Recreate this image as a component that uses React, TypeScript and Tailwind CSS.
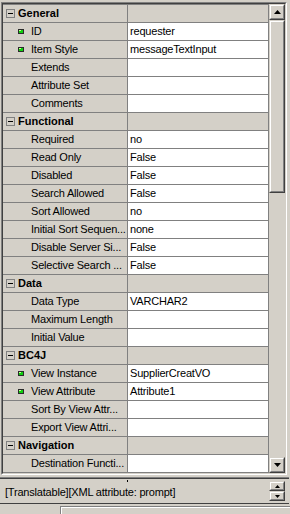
import React from "react";

type Row = { h?: string; l?: string; v?: string; icon?: boolean };

const rows: Row[] = [
  { h: "General" },
  { l: "ID", v: "requester", icon: true },
  { l: "Item Style", v: "messageTextInput", icon: true },
  { l: "Extends" },
  { l: "Attribute Set" },
  { l: "Comments" },
  { h: "Functional" },
  { l: "Required", v: "no" },
  { l: "Read Only", v: "False" },
  { l: "Disabled", v: "False" },
  { l: "Search Allowed", v: "False" },
  { l: "Sort Allowed", v: "no" },
  { l: "Initial Sort Sequen...", v: "none" },
  { l: "Disable Server Si...", v: "False" },
  { l: "Selective Search ...", v: "False" },
  { h: "Data" },
  { l: "Data Type", v: "VARCHAR2" },
  { l: "Maximum Length" },
  { l: "Initial Value" },
  { h: "BC4J" },
  { l: "View Instance", v: "SupplierCreatVO", icon: true },
  { l: "View Attribute", v: "Attribute1", icon: true },
  { l: "Sort By View Attr..." },
  { l: "Export View Attri..." },
  { h: "Navigation" },
  { l: "Destination Functi..." },
];

// classic win32 raised edge
function Raised({ className = "", children }: { className?: string; children?: React.ReactNode }) {
  return (
    <div className={`border-t border-l border-t-[#d4d0c8] border-l-[#d4d0c8] border-b border-r border-b-[#404040] border-r-[#404040] ${className}`}>
      <div className="w-full h-full border-t border-l border-t-white border-l-white border-b border-r border-b-[#808080] border-r-[#808080] bg-[#d4d0c8] flex items-center justify-center">
        {children}
      </div>
    </div>
  );
}

function Arrow({ up, w = 7, h = 4 }: { up?: boolean; w?: number; h?: number }) {
  const pts = up ? `0,${h} ${w},${h} ${w / 2},0` : `0,0 ${w},0 ${w / 2},${h}`;
  return (
    <svg width={w} height={h} viewBox={`0 0 ${w} ${h}`} className="block">
      <polygon points={pts} fill="#000" />
    </svg>
  );
}

function GreenDot() {
  return (
    <div className="w-[6px] h-[5px] border border-[#2b2b2b] bg-[#10d010] relative shrink-0">
      <div className="absolute left-0 top-0 w-[2px] h-[1px] bg-[#c8ff90]" />
    </div>
  );
}

function MinusBox() {
  return (
    <div className="w-[9px] h-[9px] border border-[#808080] bg-[#d4d0c8] flex items-center justify-center shrink-0">
      <div className="w-[5px] h-px bg-black" />
    </div>
  );
}

export default function App() {
  return (
    <div className="w-[290px] h-[514px] bg-[#d4d0c8] overflow-hidden text-[11px] text-black font-['Liberation_Sans',Arial,sans-serif] flex flex-col">
      {/* property sheet frame */}
      <div className="ml-px mt-[2px] w-[286px] h-[473px] border-t border-l border-t-[#808080] border-l-[#808080] border-b border-r border-b-white border-r-white">
        <div className="w-full h-full border-t border-l border-t-[#404040] border-l-[#404040] border-b border-r border-b-[#d4d0c8] border-r-[#d4d0c8] flex">
          <div className="w-[266px] border-t border-r border-[#808080] flex flex-col">
            {rows.map((r, i) => (
              <div key={i} className="h-[18px] flex border-b border-[#808080] shrink-0">
                <div className="w-[125px] border-r border-[#808080] flex items-center overflow-hidden whitespace-nowrap">
                  {r.h ? (
                    <>
                      <div className="ml-[3px] mr-[3px]">
                        <MinusBox />
                      </div>
                      <span className="font-bold">{r.h}</span>
                    </>
                  ) : (
                    <>
                      <div className="w-[28px] pl-[15px] shrink-0">{r.icon && <GreenDot />}</div>
                      <span className="tracking-[-0.2px]">{r.l}</span>
                    </>
                  )}
                </div>
                <div className={`flex-1 flex items-center pl-[2px] whitespace-nowrap overflow-hidden tracking-[-0.2px] ${r.h ? "" : "bg-white"}`}>
                  {r.v}
                </div>
              </div>
            ))}
          </div>
          {/* vertical scrollbar */}
          <div className="w-[16px] flex flex-col">
            <Raised className="w-[16px] h-[16px]">
              <Arrow up />
            </Raised>
            <Raised className="w-[16px] h-[173px]" />
            <div className="flex-1" />
            <Raised className="w-[16px] h-[16px]">
              <Arrow />
            </Raised>
          </div>
        </div>
      </div>

      {/* description box */}
      <div className="mt-[2px] w-[289px] h-[27px] border-t border-[#808080] border-b border-b-[#404040] relative">
        <div className="w-full h-full border-t border-[#404040] flex items-center">
          <span className="pl-[5px] pt-[3px] flex-1 tracking-[-0.2px] whitespace-nowrap">[Translatable][XML attribute: prompt]</span>
          <div className="w-[16px] mr-[4px] flex flex-col">
            <Raised className="w-[16px] h-[10px]">
              <Arrow up w={5} h={3} />
            </Raised>
            <Raised className="w-[16px] h-[10px]">
              <Arrow w={5} h={3} />
            </Raised>
          </div>
        </div>
        <div className="absolute left-[127px] top-[2px] w-px h-[2px] bg-black" />
      </div>

      {/* status strip */}
      <div className="flex-1 pl-[60px] pt-[2px]">
        <div className="w-full h-full border-t border-l border-[#808080]">
          <div className="w-full h-full border-t border-l border-white" />
        </div>
      </div>
    </div>
  );
}
